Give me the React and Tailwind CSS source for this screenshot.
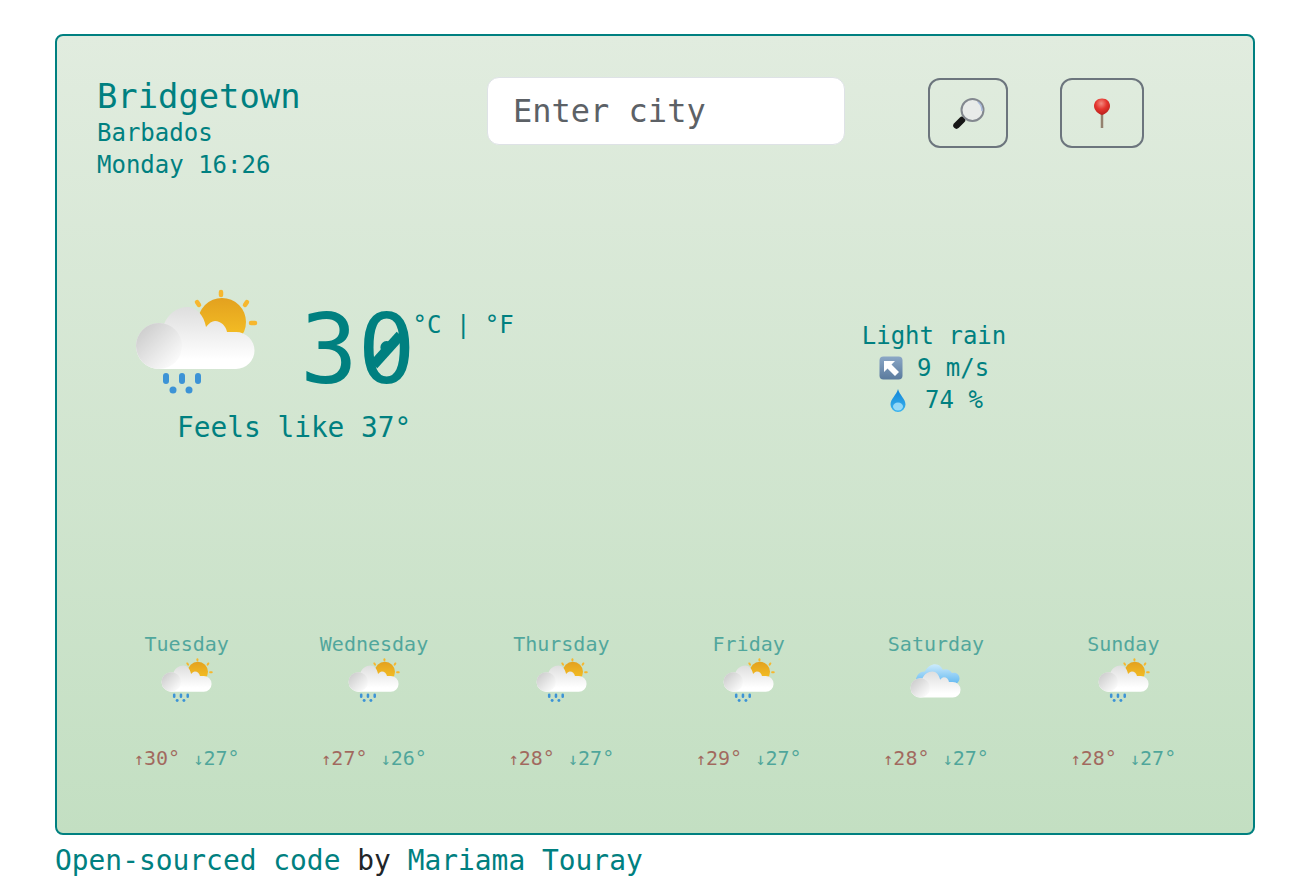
import { useId } from "react";

const mono = "font-['DejaVu_Sans_Mono','Liberation_Mono',monospace]";

const days = [
  { name: "Tuesday", hi: 30, lo: 27, rain: true },
  { name: "Wednesday", hi: 27, lo: 26, rain: true },
  { name: "Thursday", hi: 28, lo: 27, rain: true },
  { name: "Friday", hi: 29, lo: 27, rain: true },
  { name: "Saturday", hi: 28, lo: 27, rain: false },
  { name: "Sunday", hi: 28, lo: 27, rain: true },
];

function Cloud({ id, dy = 0 }) {
  return (
    <g transform={`translate(0 ${dy})`}>
      <defs>
        <linearGradient id={id + "c"} x1="0" y1="0" x2="0" y2="1">
          <stop offset="0" stopColor="#dedede" />
          <stop offset="0.85" stopColor="#ffffff" />
        </linearGradient>
        <linearGradient id={id + "l"} x1="0" y1="0" x2="1" y2="1">
          <stop offset="0" stopColor="#c6c6c6" />
          <stop offset="0.85" stopColor="#fafafa" />
        </linearGradient>
      </defs>
      <path
        fill={`url(#${id}c)`}
        d="M29 84 A23 23 0 0 1 29 38 C31 38 33 38 34 39 C38 29 47 22 58 22 C66 22 74 30 76 42 C79 38 82 36 85 36 C91 36 96 41 97 47 L106 47 A18.500 18.500 0 0 1 106 84 Z"
      />
      <circle cx="29" cy="61" r="23" fill={`url(#${id}l)`} />
    </g>
  );
}

function WeatherIcon({ rain, className }) {
  const id = useId().replace(/[^a-zA-Z0-9]/g, "");
  return (
    <svg viewBox="0 0 135 115" className={className}>
      <defs>
        <linearGradient id={id + "s"} x1="0" y1="0" x2="0" y2="1">
          <stop offset="0" stopColor="#e3a11f" />
          <stop offset="1" stopColor="#f8c525" />
        </linearGradient>
        <linearGradient id={id + "b"} gradientUnits="userSpaceOnUse" x1="0" y1="19" x2="0" y2="66">
          <stop offset="0" stopColor="#cdebfc" />
          <stop offset="1" stopColor="#62b8f0" />
        </linearGradient>
      </defs>
      {rain ? (
        <>
          <circle cx="92" cy="37" r="24" fill={`url(#${id}s)`} />
          <g stroke="#f7b72e" strokeWidth="4.500" strokeLinecap="round">
            <path d="M91 7 V10" />
            <path d="M67 17 L69 20" />
            <path d="M117 17 L115 20" />
            <path d="M121 38 H125" />
          </g>
          <Cloud id={id} />
          <g stroke="#3c93d6" strokeWidth="6" strokeLinecap="round">
            <path d="M36 91 V96" />
            <path d="M52 91 V96" />
            <path d="M68 91 V96" />
          </g>
          <circle cx="43" cy="105" r="3.500" fill="#3c93d6" />
          <circle cx="59" cy="105" r="3.500" fill="#3c93d6" />
        </>
      ) : (
        <>
          <g fill={`url(#${id}b)`}>
            <path d="M22 66 A20 20 0 0 1 40 36 C46 24 56 19 64 19 C74 19 80 26 82 32 C92 28 102 34 104 40 C114 36 122 44 122 52 C122 60 116 66 108 66 Z" />
          </g>
          <Cloud id={id} dy={14} />
        </>
      )}
    </svg>
  );
}

function Magnifier() {
  return (
    <svg viewBox="0 0 36 36" className="w-[36px] h-[36px]">
      <path d="M16 21 L11 26" stroke="#6a6a6a" strokeWidth="2.500" />
      <path d="M12 25 L6.500 30.500" stroke="#171717" strokeWidth="6.500" strokeLinecap="round" />
      <circle cx="22.500" cy="15" r="11" fill="#e8ebe9" stroke="#83888f" strokeWidth="2" />
      <path d="M28 7 A11 11 0 0 1 32 16" stroke="#a9bbdc" strokeWidth="1.500" fill="none" />
    </svg>
  );
}

function Pin() {
  return (
    <svg viewBox="0 0 36 36" className="w-[36px] h-[36px]">
      <defs>
        <radialGradient id="pinhead" cx="0.45" cy="0.3" r="0.7">
          <stop offset="0" stopColor="#f28a80" />
          <stop offset="0.5" stopColor="#e5352e" />
          <stop offset="1" stopColor="#b8201c" />
        </radialGradient>
      </defs>
      <path d="M18 18 V33" stroke="#94826f" strokeWidth="2.500" />
      <path d="M18 3.500 C23 3.500 26 7 26 11 C26 15 22 19 18 20 C14 19 10 15 10 11 C10 7 13 3.500 18 3.500 Z" fill="url(#pinhead)" />
    </svg>
  );
}

function ArrowBox() {
  return (
    <svg viewBox="0 0 24 24" className="w-[24px] h-[24px] shrink-0">
      <defs>
        <linearGradient id="arrowbox" x1="0" y1="0" x2="0" y2="1">
          <stop offset="0" stopColor="#8ba7c6" />
          <stop offset="1" stopColor="#5a7a9d" />
        </linearGradient>
      </defs>
      <rect x="0.500" y="0.500" width="23" height="23" rx="4" fill="url(#arrowbox)" />
      <path d="M5 5 H16 L12.500 8.500 L20 16 L16 20 L8.500 12.500 L5 16 Z" fill="#ffffff" />
    </svg>
  );
}

function Drop() {
  return (
    <svg viewBox="0 0 16 23" className="w-[16px] h-[23px] shrink-0">
      <defs>
        <linearGradient id="drop" x1="0" y1="0" x2="0" y2="1">
          <stop offset="0" stopColor="#0f84d8" />
          <stop offset="1" stopColor="#3cb4ee" />
        </linearGradient>
      </defs>
      <path d="M8 0 C9.500 6 15.500 10 15.500 15.500 A7.500 7.500 0 0 1 0.500 15.500 C0.500 10 6.500 6 8 0 Z" fill="url(#drop)" />
      <ellipse cx="8" cy="17.500" rx="5" ry="4" fill="#b5e8fc" opacity="0.75" />
    </svg>
  );
}

function Day({ name, hi, lo, rain }) {
  return (
    <div className="flex flex-col items-center text-[20px] leading-[28px]">
      <div className="text-[#008080] opacity-60 -mb-[2px]">{name}</div>
      <WeatherIcon rain={rain} className="w-[57px] h-[49px] ml-[2px]" />
      <div className="mt-[39px] flex gap-[13px]">
        <div className="flex items-baseline text-[#8b1a1a] opacity-60">
          <span className="text-[17px]">↑</span>
          <span>{hi}°</span>
        </div>
        <div className="flex items-baseline text-[#008080] opacity-60">
          <span className="text-[17px]">↓</span>
          <span>{lo}°</span>
        </div>
      </div>
    </div>
  );
}

export default function App() {
  return (
    <div className={`${mono} bg-white min-h-screen pt-[34px] pl-[55px]`}>
      <div className="w-[1200px] h-[801px] flex flex-col rounded-lg border-2 border-[#008080] bg-gradient-to-b from-[#e1ecdf] to-[#c3dfc2] text-[#008080]">
        <div className="flex pt-[41px] pl-[40px]">
          <div className="w-[390px]">
            <div className="text-[33.800px] leading-[40px]">Bridgetown</div>
            <div className="text-[24px] leading-[32px]">Barbados</div>
            <div className="text-[24px] leading-[32px]">Monday 16:26</div>
          </div>
          <input
            type="text"
            placeholder="Enter city"
            className="w-[358px] h-[68px] rounded-xl border border-[#dee2e6] bg-white px-[25px] text-[32px] text-[#212529] placeholder:text-[#5c6166] outline-none"
          />
          <button className="mt-[1px] ml-[83px] w-[80px] h-[70px] flex items-center justify-center rounded-xl border-2 border-[#6c757d]">
            <Magnifier />
          </button>
          <button className="mt-[1px] ml-[52px] w-[84px] h-[70px] flex items-center justify-center rounded-xl border-2 border-[#6c757d]">
            <Pin />
          </button>
        </div>

        <div className="flex mt-[104px] pl-[73px]">
          <div className="w-[400px]">
            <div className="flex">
              <WeatherIcon rain className="w-[135px] h-[115px]" />
              <div className="ml-[35px] mt-[4px] text-[96px] leading-[122px]">
                3
                <span className="relative">
                  0
                  <span className="absolute left-[9px] top-[51px] w-[40px] h-[10px] bg-[#008080] -rotate-[48deg]" />
                </span>
              </div>
              <div className="text-[24px] leading-[32px] mt-[24px] ml-[-3px]">°C | °F</div>
            </div>
            <div className="ml-[47px] mt-[-1px] text-[27.800px] leading-[36px]">Feels like 37°</div>
          </div>
          <div className="ml-[304px] w-[200px] mt-[35px] flex flex-col items-center text-[24px] leading-[32px]">
            <div>Light rain</div>
            <div className="flex items-center gap-[14px]">
              <ArrowBox />
              <span>9 m/s</span>
            </div>
            <div className="flex items-center gap-[19px] pl-[5px]">
              <Drop />
              <span>74 %</span>
            </div>
          </div>
        </div>

        <div className="mt-auto pb-[60px] px-[36px] grid grid-cols-6">
          {days.map((d) => (
            <Day key={d.name} {...d} />
          ))}
        </div>
      </div>
      <div className="text-[27.900px] leading-[50px] text-[#212529] mt-[1px]">
        <a className="text-[#008080]">Open-sourced code</a> by <a className="text-[#008080]">Mariama Touray</a>
      </div>
    </div>
  );
}
